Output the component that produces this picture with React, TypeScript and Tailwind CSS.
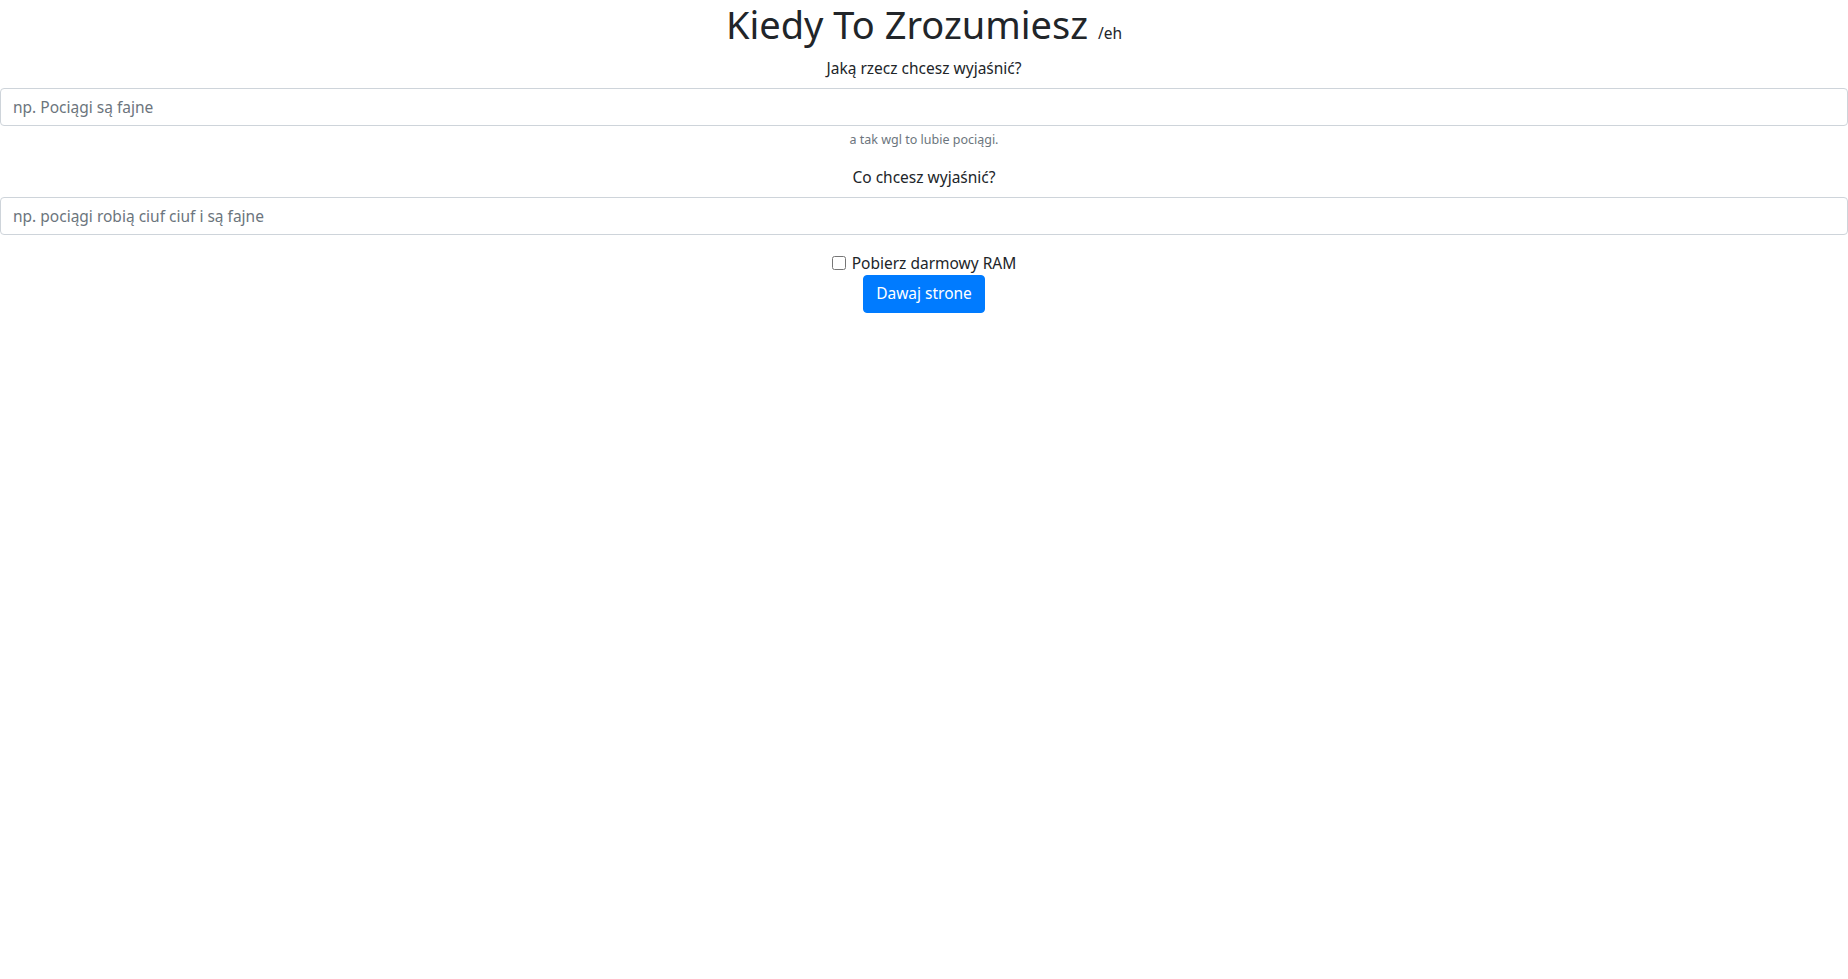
import React from "react";

export default function App() {
  return (
    <div className="min-h-[979px] w-full bg-white text-[#212529] text-center text-[16px] leading-[1.5] font-['Noto_Sans',sans-serif]">
      <h1 className="h-[48px] text-[38px] leading-[48px] font-normal mb-2">
        Kiedy To Zrozumiesz <small className="text-[15.5px] leading-none font-normal">/eh</small>
      </h1>
      <form className="w-full" onSubmit={(e) => e.preventDefault()}>
        <div className="mb-4">
          <label className="inline-block mb-2 text-[15.5px] leading-[24px]">Jaką rzecz chcesz wyjaśnić?</label>
          <input
            type="text"
            placeholder="np. Pociągi są fajne"
            className="block w-full h-[38px] px-3 py-[6px] text-[15.5px] border border-[#ced4da] rounded-[4px] bg-white placeholder:text-[#6c757d] text-[#495057] outline-none"
          />
          <small className="block mt-1 text-[12.5px] leading-[19px] text-[#6c757d]">a tak wgl to lubie pociągi.</small>
        </div>
        <div className="mb-4">
          <label className="inline-block mb-2 text-[15.5px] leading-[24px]">Co chcesz wyjaśnić?</label>
          <input
            type="text"
            placeholder="np. pociągi robią ciuf ciuf i są fajne"
            className="block w-full h-[38px] px-3 py-[6px] text-[15.5px] border border-[#ced4da] rounded-[4px] bg-white placeholder:text-[#6c757d] text-[#495057] outline-none"
          />
        </div>
        <div className="flex items-center justify-center h-[24px]">
          <input type="checkbox" id="ram" className="w-[14px] h-[14px] mr-[6px]" />
          <label htmlFor="ram" className="text-[15.5px] leading-[24px]">Pobierz darmowy RAM</label>
        </div>
        <button
          type="submit"
          className="h-[38px] px-3 text-[15.5px] text-white bg-[#007bff] border border-[#007bff] rounded-[4px]"
        >
          Dawaj strone
        </button>
      </form>
    </div>
  );
}
